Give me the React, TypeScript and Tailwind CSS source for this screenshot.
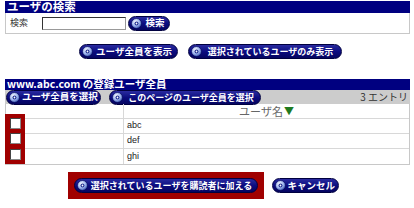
import React from 'react';

const jp = "font-['Noto_Sans_CJK_JP','Noto_Sans',sans-serif]";

const Dot: React.FC = () => (
  <svg width="11" height="11" viewBox="0 0 11 11" className="shrink-0">
    <defs>
      <radialGradient id="g" cx="40%" cy="35%" r="65%">
        <stop offset="0%" stopColor="#ffffff" />
        <stop offset="60%" stopColor="#9fb6ee" />
        <stop offset="100%" stopColor="#3a55b0" />
      </radialGradient>
    </defs>
    <circle cx="5.5" cy="5.5" r="5" fill="url(#g)" stroke="#000050" strokeWidth="0.6" />
    <circle cx="5.5" cy="5.5" r="2" fill="#1a2a90" />
    <circle cx="5.5" cy="5.5" r="0.9" fill="#ffffff" />
  </svg>
);

const Btn: React.FC<{ label: string; w: string; small?: boolean }> = ({ label, w, small }) => (
  <div
    className={`${w} h-[15px] shrink-0 rounded-full bg-gradient-to-b from-[#2a2aa0] via-[#0c0c80] to-[#050560] border border-[#000040] flex items-center gap-[2px] pl-[2px] pr-[3px] text-white font-bold ${small ? 'text-[9px]' : 'text-[9.5px]'} leading-none whitespace-nowrap`}
  >
    <Dot />
    <span className="flex-1 text-center">{label}</span>
  </div>
);

const rows = ['abc', 'def', 'ghi'];

export default function App() {
  return (
    <div className={`relative w-[414px] h-[208px] bg-white overflow-hidden ${jp}`}>
      {/* search section */}
      <div className="ml-[5px] w-[405px] pt-[1px]">
        <div className="h-[12px] bg-[#000080] text-white font-bold text-[11.5px] leading-none pl-[2px] flex items-center">
          ユーザの検索
        </div>
        <div className="h-[21px] border border-t-0 border-[#c8c8c8] flex items-center">
          <span className="w-[36px] pl-[4px] text-[9px] text-[#333]">検索</span>
          <div className="w-[84px] h-[13px] bg-white border border-[#999] border-t-[#333] border-l-[#333]" />
          <div className="ml-[2px]">
            <Btn label="検索" w="w-[42px]" />
          </div>
        </div>
      </div>

      <div className="mt-[10px] flex justify-center gap-[10px] pl-[6px]">
        <Btn label="ユーザ全員を表示" w="w-[99px]" />
        <Btn label="選択されているユーザのみ表示" w="w-[154px]" small />
      </div>

      {/* users section */}
      <div className="ml-[5px] w-[405px] mt-[20px]">
        <div className="h-[11px] bg-[#000080] text-white font-bold text-[10.5px] leading-none pl-[2px] flex items-center">
          www.abc.com の登録ユーザ全員
        </div>
        <div className="h-[14px] bg-[#cccccc] flex items-center gap-[8px] pl-[1px] pr-[2px]">
          <Btn label="ユーザ全員を選択" w="w-[95px]" />
          <Btn label="このページのユーザ全員を選択" w="w-[152px]" small />
          <span className="ml-auto text-[10px] text-[#333] leading-none">3 エントリ</span>
        </div>
        <div className="border border-t-0 border-[#c8c8c8]">
          <div className="h-[15px] flex border-b border-[#d8d8d8]">
            <div className="w-[118px] border-r border-[#d8d8d8]" />
            <div className="flex-1 flex items-center justify-center text-[11px] text-[#666] leading-none">
              ユーザ名<span className="text-[#1f7a1f] text-[10px] ml-[1px]">▼</span>
            </div>
          </div>
          {rows.map((r, i) => (
            <div key={r} className={`h-[15px] flex ${i < rows.length - 1 ? 'border-b border-[#d8d8d8]' : ''}`}>
              <div className="w-[118px] border-r border-[#d8d8d8]" />
              <div className="flex-1 flex items-center pl-[3px] text-[9px] text-[#222] font-['Liberation_Sans',sans-serif]">
                {r}
              </div>
            </div>
          ))}
        </div>
      </div>

      {/* checkbox column with red highlight */}
      <div className="absolute left-[5px] top-[114px] w-[20px] h-[50px] bg-[#a00000] flex flex-col justify-around items-center py-[2px]">
        {rows.map((r) => (
          <div key={r} className="w-[11px] h-[11px] bg-white border border-[#888] border-t-[#444] border-l-[#444]" />
        ))}
      </div>

      <div className="mt-[7px] flex justify-center items-center gap-[8px] pr-[8px]">
        <div className="w-[196px] h-[27px] bg-[#a00000] flex items-center justify-center">
          <Btn label="選択されているユーザを購読者に加える" w="w-[184px]" small />
        </div>
        <Btn label="キャンセル" w="w-[67px]" />
      </div>
    </div>
  );
}
